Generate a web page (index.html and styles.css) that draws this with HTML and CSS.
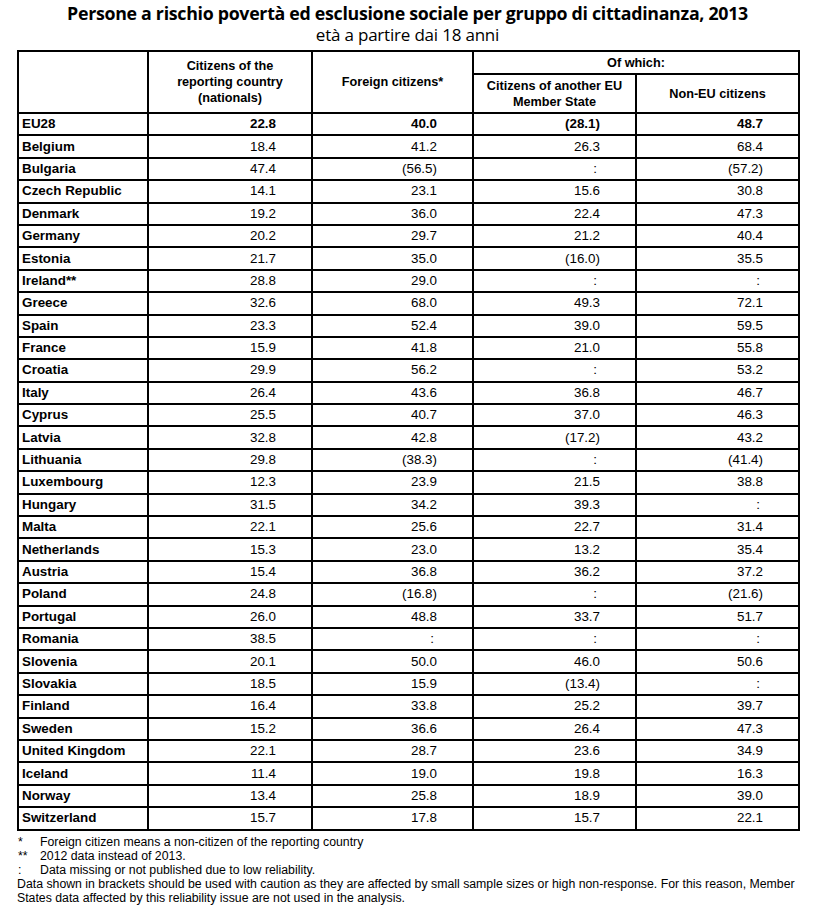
FILE: index.html
```html
<!DOCTYPE html>
<html lang="it">
<head>
<meta charset="utf-8">
<link rel="stylesheet" href="styles.css">
</head>
<body>
<div class="page">
  <h1 class="title">Persone a rischio povertà ed esclusione sociale per gruppo di cittadinanza, 2013</h1>
  <p class="subtitle">età a partire dai 18 anni</p>
  <table class="data">
    <colgroup>
      <col class="c0"><col class="c1"><col class="c2"><col class="c3"><col class="c4">
    </colgroup>
    <thead>
      <tr class="h1">
        <th rowspan="2"></th>
        <th rowspan="2">Citizens of the<br>reporting country<br>(nationals)</th>
        <th rowspan="2">Foreign citizens*</th>
        <th colspan="2">Of which:</th>
      </tr>
      <tr class="h2">
        <th>Citizens of another EU<br>Member State</th>
        <th>Non-EU citizens</th>
      </tr>
    </thead>
    <tbody>
      <tr class="total"><td>EU28</td><td>22.8</td><td>40.0</td><td>(28.1)</td><td>48.7</td></tr>
      <tr><td>Belgium</td><td>18.4</td><td>41.2</td><td>26.3</td><td>68.4</td></tr>
      <tr><td>Bulgaria</td><td>47.4</td><td>(56.5)</td><td class="na">:</td><td>(57.2)</td></tr>
      <tr><td>Czech Republic</td><td>14.1</td><td>23.1</td><td>15.6</td><td>30.8</td></tr>
      <tr><td>Denmark</td><td>19.2</td><td>36.0</td><td>22.4</td><td>47.3</td></tr>
      <tr><td>Germany</td><td>20.2</td><td>29.7</td><td>21.2</td><td>40.4</td></tr>
      <tr><td>Estonia</td><td>21.7</td><td>35.0</td><td>(16.0)</td><td>35.5</td></tr>
      <tr><td>Ireland**</td><td>28.8</td><td>29.0</td><td class="na">:</td><td class="na">:</td></tr>
      <tr><td>Greece</td><td>32.6</td><td>68.0</td><td>49.3</td><td>72.1</td></tr>
      <tr><td>Spain</td><td>23.3</td><td>52.4</td><td>39.0</td><td>59.5</td></tr>
      <tr><td>France</td><td>15.9</td><td>41.8</td><td>21.0</td><td>55.8</td></tr>
      <tr><td>Croatia</td><td>29.9</td><td>56.2</td><td class="na">:</td><td>53.2</td></tr>
      <tr><td>Italy</td><td>26.4</td><td>43.6</td><td>36.8</td><td>46.7</td></tr>
      <tr><td>Cyprus</td><td>25.5</td><td>40.7</td><td>37.0</td><td>46.3</td></tr>
      <tr><td>Latvia</td><td>32.8</td><td>42.8</td><td>(17.2)</td><td>43.2</td></tr>
      <tr><td>Lithuania</td><td>29.8</td><td>(38.3)</td><td class="na">:</td><td>(41.4)</td></tr>
      <tr><td>Luxembourg</td><td>12.3</td><td>23.9</td><td>21.5</td><td>38.8</td></tr>
      <tr><td>Hungary</td><td>31.5</td><td>34.2</td><td>39.3</td><td class="na">:</td></tr>
      <tr><td>Malta</td><td>22.1</td><td>25.6</td><td>22.7</td><td>31.4</td></tr>
      <tr><td>Netherlands</td><td>15.3</td><td>23.0</td><td>13.2</td><td>35.4</td></tr>
      <tr><td>Austria</td><td>15.4</td><td>36.8</td><td>36.2</td><td>37.2</td></tr>
      <tr><td>Poland</td><td>24.8</td><td>(16.8)</td><td class="na">:</td><td>(21.6)</td></tr>
      <tr><td>Portugal</td><td>26.0</td><td>48.8</td><td>33.7</td><td>51.7</td></tr>
      <tr><td>Romania</td><td>38.5</td><td class="na">:</td><td class="na">:</td><td class="na">:</td></tr>
      <tr><td>Slovenia</td><td>20.1</td><td>50.0</td><td>46.0</td><td>50.6</td></tr>
      <tr><td>Slovakia</td><td>18.5</td><td>15.9</td><td>(13.4)</td><td class="na">:</td></tr>
      <tr><td>Finland</td><td>16.4</td><td>33.8</td><td>25.2</td><td>39.7</td></tr>
      <tr><td>Sweden</td><td>15.2</td><td>36.6</td><td>26.4</td><td>47.3</td></tr>
      <tr><td>United Kingdom</td><td>22.1</td><td>28.7</td><td>23.6</td><td>34.9</td></tr>
      <tr><td>Iceland</td><td>11.4</td><td>19.0</td><td>19.8</td><td>16.3</td></tr>
      <tr><td>Norway</td><td>13.4</td><td>25.8</td><td>18.9</td><td>39.0</td></tr>
      <tr><td>Switzerland</td><td>15.7</td><td>17.8</td><td>15.7</td><td>22.1</td></tr>
    </tbody>
  </table>
  <div class="notes">
    <div class="note"><span class="mark">*</span><span>Foreign citizen means a non-citizen of the reporting country</span></div>
    <div class="note"><span class="mark">**</span><span>2012 data instead of 2013.</span></div>
    <div class="note"><span class="mark">:</span><span>Data missing or not published due to low reliability.</span></div>
    <p class="para">Data shown in brackets should be used with caution as they are affected by small sample sizes or high non-response. For this reason, Member States data affected by this reliability issue are not used in the analysis.</p>
  </div>
</div>
</body>
</html>
```

FILE: styles.css
```css
html, body {
  margin: 0;
  padding: 0;
  background: #ffffff;
  color: #000000;
}

.page {
  width: 818px;
  padding: 0 0 0 17px;
  box-sizing: border-box;
  font-family: "Liberation Sans", Arial, sans-serif;
}

.title {
  margin: 0;
  padding-top: 2px;
  width: 781px;
  text-align: center;
  font-family: "Open Sans", sans-serif;
  font-weight: 700;
  font-size: 17.8px;
  letter-spacing: -0.3px;
  line-height: 22px;
}

.subtitle {
  margin: 0;
  width: 781px;
  text-align: center;
  font-family: "Open Sans", sans-serif;
  font-size: 17px;
  letter-spacing: -0.2px;
  line-height: 22px;
  height: 26px;
}

.data {
  border-collapse: collapse;
  table-layout: fixed;
  width: 781px;
  font-size: 13.4px;
}

.c0 { width: 130px; }
.c1 { width: 164px; }
.c2 { width: 161px; }
.c3 { width: 163px; }
.c4 { width: 163px; }

.data th,
.data td {
  border: 2px solid #000;
  padding: 0;
}

.data th {
  font-size: 12.7px;
  font-weight: 700;
  line-height: 16px;
  text-align: center;
  vertical-align: middle;
}

.h1 { height: 23px; }
.h2 { height: 39px; }

.data tbody tr { height: 22.4px; }

.data td {
  text-align: right;
  padding-right: 35px;
  line-height: 16px;
  vertical-align: middle;
}

.data td:first-child {
  text-align: left;
  padding-left: 3px;
  padding-right: 0;
  font-weight: 700;
}

.data td.na { padding-right: 38px; }

.total td { font-weight: 700; }

.notes {
  width: 781px;
  padding-top: 4px;
  font-size: 12.3px;
  line-height: 14.2px;
}

.note {
  display: flex;
}

.mark {
  width: 22px;
  padding-left: 1px;
  flex: none;
}

.para {
  margin: 0;
}
```
